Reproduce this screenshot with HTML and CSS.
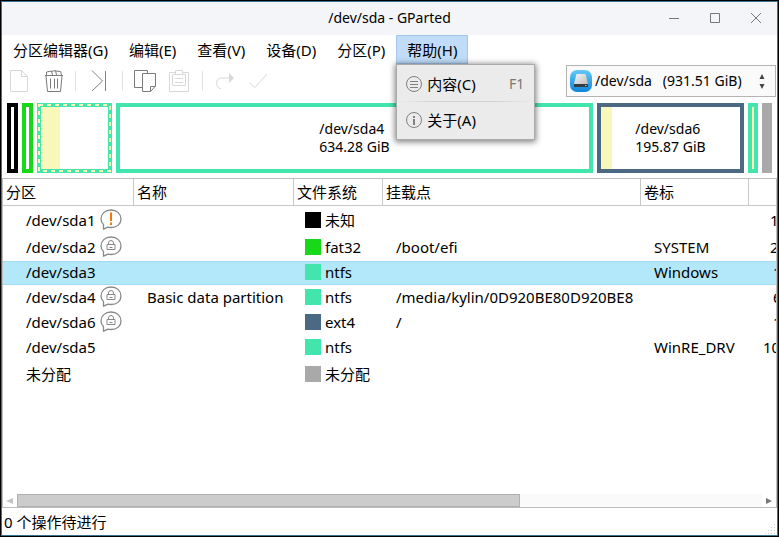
FILE: index.html
```html
<!DOCTYPE html>
<html lang="zh-CN">
<head>
<meta charset="utf-8">
<title>/dev/sda - GParted</title>
<link rel="stylesheet" href="styles.css">
</head>
<body>
<svg width="0" height="0" class="defs" aria-hidden="true">
  <symbol id="bubble" viewBox="0 0 22 22"><path d="M3.500 20.200V15.600C1.700 14 1 12 1 10 1 5 5 1 11 1s10 4 10 9-4 8.500-10 8.500c-1 0-2-.1-3-.4z" fill="none" stroke="#888" stroke-width="1.300" stroke-linejoin="round"/></symbol>
  <symbol id="lock" viewBox="0 0 22 22"><use href="#bubble"/><path d="M7 8.500h8v5H7zM8.500 8.500V7q0-2.500 2.500-2.500t2.500 2.500v1.500M9.500 11.500h3" fill="none" stroke="#888"/></symbol>
  <symbol id="warn" viewBox="0 0 22 22"><use href="#bubble"/><path d="M11 3.500v8.500M11 13.500v2.500" stroke="#f57900" stroke-width="2"/></symbol>
</svg>
<div class="window">
  <header class="titlebar">
    <h1>/dev/sda - GParted</h1>
    <div class="controls">
      <button aria-label="最小化"><svg width="12" height="12"><path d="M1 6.500h10" stroke="#777"/></svg></button>
      <button aria-label="最大化"><svg width="12" height="12"><path d="M1.500 1.500h9v9h-9z" fill="none" stroke="#777"/></svg></button>
      <button aria-label="关闭"><svg width="12" height="12"><path d="M1 1l10 10M11 1L1 11" stroke="#777"/></svg></button>
    </div>
  </header>

  <nav class="menubar">
    <button>分区编辑器(G)</button>
    <button>编辑(E)</button>
    <button>查看(V)</button>
    <button>设备(D)</button>
    <button>分区(P)</button>
    <div class="menu-host">
      <button class="open">帮助(H)</button>
      <div class="menu">
        <button>
          <svg width="18" height="18" fill="none" stroke="#808080"><circle cx="9" cy="9" r="7.500"/><path d="M5 6.500h8M5 9.500h8M5 12.500h8"/></svg>
          <span>内容(C)</span><kbd>F1</kbd>
        </button>
        <hr>
        <button>
          <svg width="18" height="18" fill="none" stroke="#808080"><circle cx="9" cy="9" r="7.500"/><path d="M9 5v2M9 8v6" stroke-width="2"/></svg>
          <span>关于(A)</span>
        </button>
      </div>
    </div>
  </nav>

  <div class="toolbar">
    <div class="tools">
      <button disabled aria-label="新建"><svg width="24" height="24"><path d="M3.500 1.500h11l6 6v15h-17zM14.500 1.500v6h6" fill="none" stroke="#d8d8d8"/></svg></button>
      <button class="trash" aria-label="删除"><svg width="24" height="24"><path d="M3 6.500h18M4 7l1.500 15.500h13L20 7M4.500 6V3l5-1 1 4M9.500 2.500l4-1 1 4.500M13.500 2l5 .5L19.500 6M8.500 9.500v10M12.500 9.500v10M15.500 9.500v10" fill="none" stroke="#7b7b7b"/></svg></button>
      <i></i>
      <button class="next" aria-label="调整大小/移动"><svg width="24" height="24"><path d="M5 1.500L15.500 12 5 22M18.500 2v20" fill="none" stroke="#808080"/></svg></button>
      <i></i>
      <button class="copy" aria-label="复制"><svg width="24" height="24"><path d="M9 18.500H1.500v-17h13V4M9.500 4.500h13V17l-5 5.500h-8zM17.500 22.500V17.500h5" fill="none" stroke="#7b7b7b"/></svg></button>
      <button class="paste" disabled aria-label="粘贴"><svg width="24" height="24"><path d="M8 3.500H2.500v19h19v-19H16M8.500 5.500v-4h7v4M5.500 5.500h13v11h-13zM8 9.500h8M8 13.500h8" fill="none" stroke="#d8d8d8"/></svg></button>
      <i></i>
      <button class="undo" disabled aria-label="撤消"><svg width="24" height="24"><path d="M9 19.500H8a5 5.500 0 0 1 0-10.500h9" fill="none" stroke="#d8d8d8"/><path d="M17 4v10l5-5z" fill="#d8d8d8"/></svg></button>
      <button class="apply" disabled aria-label="应用"><svg width="24" height="24"><path d="M3.500 13.500l5.500 5L21 5" fill="none" stroke="#d8d8d8"/></svg></button>
    </div>
    <label class="device">
      <svg width="22" height="22"><defs><linearGradient id="blue" x2="0" y2="1"><stop stop-color="#64c9f7"/><stop offset="1" stop-color="#0e86d8"/></linearGradient><linearGradient id="metal" x2="1" y2="1"><stop stop-color="#f6f6f6"/><stop offset="1" stop-color="#bdbdbd"/></linearGradient></defs><rect width="22" height="22" rx="7" fill="url(#blue)"/><path d="M6.500 4h9L18 14H4z" fill="url(#metal)"/><path d="M4 14h14v3H4z" fill="#343b42"/><path d="M15 15.500h1.500" stroke="#6df"/></svg>
      <select aria-label="设备"><option>/dev/sda &nbsp; (931.51 GiB)</option></select>
      <svg width="8" height="18"><path d="M4 2l2.500 5h-5zM4 17l2.500-5h-5z" fill="#444"/></svg>
    </label>
  </div>

  <div class="disk">
    <div class="part tiny unknown"></div>
    <div class="part tiny fat"></div>
    <div class="part sda3 ntfs"><span class="used"></span><svg class="marching"><rect x="2" y="2"/></svg></div>
    <div class="part sda4 ntfs"><p>/dev/sda4<br>634.28 GiB</p></div>
    <div class="part sda6 ext"><span class="used"></span><p>/dev/sda6<br>195.87 GiB</p></div>
    <div class="part small ntfs"><span class="used"></span></div>
    <div class="part small free"></div>
  </div>

  <main class="list">
    <div class="view">
      <table>
        <colgroup><col class="c-part"><col class="c-name"><col class="c-fs"><col class="c-mount"><col class="c-label"><col></colgroup>
        <thead><tr><th>分区</th><th>名称</th><th>文件系统</th><th>挂载点</th><th>卷标</th><th></th></tr></thead>
        <tbody>
          <tr class="tall"><td><div class="cell">/dev/sda1<svg><use href="#warn"/></svg></div></td><td></td><td><div class="cell"><b class="unknown"></b>未知</div></td><td></td><td></td><td class="size">1</td></tr>
          <tr class="medium"><td><div class="cell">/dev/sda2<svg><use href="#lock"/></svg></div></td><td></td><td><div class="cell"><b class="fat"></b>fat32</div></td><td>/boot/efi</td><td>SYSTEM</td><td class="size">2</td></tr>
          <tr class="selected"><td>/dev/sda3</td><td></td><td><div class="cell"><b class="ntfs"></b>ntfs</div></td><td></td><td>Windows</td><td class="size gib">1</td></tr>
          <tr><td><div class="cell">/dev/sda4<svg><use href="#lock"/></svg></div></td><td>Basic data partition</td><td><div class="cell"><b class="ntfs"></b>ntfs</div></td><td>/media/kylin/0D920BE80D920BE8</td><td></td><td class="size gib">6</td></tr>
          <tr><td><div class="cell">/dev/sda6<svg><use href="#lock"/></svg></div></td><td></td><td><div class="cell"><b class="ext"></b>ext4</div></td><td>/</td><td></td><td class="size gib">1</td></tr>
          <tr><td>/dev/sda5</td><td></td><td><div class="cell"><b class="ntfs"></b>ntfs</div></td><td></td><td>WinRE_DRV</td><td class="size long">10</td></tr>
          <tr class="tall"><td>未分配</td><td></td><td><div class="cell"><b class="free"></b>未分配</div></td><td></td><td></td><td></td></tr>
        </tbody>
      </table>
    </div>
    <div class="scrollbar">
      <svg width="14" height="13"><path d="M10 4v6L3 7z" fill="#c4c4c4"/></svg>
      <div class="track"><div class="thumb"></div></div>
      <svg width="14" height="13"><path d="M4 4v6l6-3z" fill="#777"/></svg>
    </div>
  </main>
  <footer class="status"><span>0 个操作待进行</span>
    <svg width="12" height="12" fill="#ccc"><path d="M10 1h1v1h-1zM7 4h1v1H7zM10 4h1v1h-1zM4 7h1v1H4zM7 7h1v1H7zM10 7h1v1h-1zM1 10h1v1H1zM4 10h1v1H4zM7 10h1v1H7zM10 10h1v1h-1z"/></svg>
  </footer>
</div>
</body>
</html>
```
FILE: styles.css
```css
* { box-sizing: border-box; }
body {
  margin: 0;
  background: #000;
  color: #000;
  font: 14px/18px "Noto Sans", "Noto Sans CJK SC", sans-serif;
}
button, select { font: inherit; color: inherit; border: 0; padding: 0; background: none; }
svg { display: block; flex: none; }
.defs { position: absolute; }
.window {
  display: flex;
  flex-direction: column;
  height: calc(100vh - 2px);
  margin: 1px;
  border: 1px solid #3a7291;
  background: #fff;
}

.titlebar {
  display: grid;
  grid-template-columns: 1fr auto 1fr;
  align-items: center;
  height: 33px;
  padding-bottom: 2px;
  background: #f4f5f8;
}
.titlebar h1 { grid-column: 2; margin: 0; font-size: 14px; font-weight: 400; }
.controls { display: flex; justify-content: flex-end; gap: 29px; padding-right: 15px; }

.menubar { display: flex; gap: 1px; height: 29px; padding-left: 1px; font-size: 15px; }
.menubar button { padding: 0 10px; height: 29px; white-space: nowrap; }
.menu-host { position: relative; }
.menubar .open { border: 1px solid #a3c7ec; background: #c0dcf8; }
.menu {
  position: absolute;
  z-index: 2;
  top: 29px;
  left: 0;
  width: 139px;
  padding: 1px 0 2px;
  border: 1px solid #aaa;
  background: #ebebeb;
  box-shadow: 0 1px 6px 1px rgba(0, 0, 0, .5);
}
.menubar .menu button { display: flex; align-items: center; gap: 4px; width: 100%; height: 35px; padding: 0 10px 0 8px; }
.menu kbd { margin-left: auto; font: inherit; font-size: 14px; color: #777; }
.menu hr { height: 1px; margin: 0; border: 0; background: linear-gradient(90deg, transparent, #d0d0d0 30%, #d0d0d0 70%, transparent); }

.toolbar { display: flex; justify-content: space-between; align-items: flex-start; height: 39px; padding: 1px 1px 0 5px; }
.tools { display: flex; align-items: center; height: 32px; }
.tools i { width: 1px; height: 20px; background: #e2e2e2; }
.tools button { flex: none; }
.trash { margin: 0 9px 0 11px; }
.next { margin: 0 11px; }
.copy { margin-left: 10px; }
.paste, .apply { margin-left: 10px; }
.paste { margin-right: 11px; }
.undo { margin-left: 9px; }
.device {
  display: flex;
  align-items: center;
  width: 210px;
  height: 32px;
  padding: 0 9px 0 3px;
  border: 1px solid #b4b4b4;
  background: #fafafa;
}
.device select { flex: 1; min-width: 0; height: 28px; padding-left: 3px; appearance: none; }

.disk { display: flex; gap: 4px; height: 75px; padding: 0 5px 5px; }
.part { position: relative; display: flex; min-width: 0; border: 4px solid; }
.part p { position: absolute; inset: 0; display: grid; place-content: center; margin: 0; }
.tiny { width: 11px; }
.small { width: 10px; }
.sda3 { flex: 67; }
.sda4 { flex: 469; }
.sda6 { flex: 139; }
.used { width: 28%; background: #f8f8ba; }
.sda6 .used { width: 8%; }
.small .used { width: 100%; }
.part.unknown { border-color: #000; }
.part.fat { border-color: #18d918; }
.part.ntfs { border-color: #42e5ac; }
.part.ext { border-color: #4b6983; }
.part.free { border-color: #a9a9a9; background: #a9a9a9; }
.marching { position: absolute; inset: -4px; width: calc(100% + 8px); height: calc(100% + 8px); }
.marching rect { width: calc(100% - 4px); height: calc(100% - 4px); fill: none; stroke: #f8f8ba; stroke-width: 2; stroke-dasharray: 4 4; }

.list { display: flex; flex-direction: column; flex: 1; min-height: 0; border: 1px solid #bdbdbd; }
.view { flex: 1; min-height: 0; overflow: hidden; }
table { width: 100%; border-collapse: separate; border-spacing: 0; table-layout: fixed; font-size: 15px; }
.c-part { width: 131px; }
.c-name { width: 160px; }
.c-fs { width: 89px; }
.c-mount { width: 258px; }
.c-label { width: 108px; }
th {
  height: 27px;
  padding: 0 3px;
  border-right: 1px solid #c8c8c8;
  border-bottom: 1px solid #c8c8c8;
  font-weight: 400;
  text-align: left;
}
th:last-child { border-right: 0; }
tbody tr { height: 25px; }
tbody .tall { height: 29px; }
tbody .medium { height: 26px; }
tbody .selected { height: 24px; background: #b3e7fa; box-shadow: inset 0 1px #9fdcf2, inset 0 -1px #9fdcf2; }
td { padding: 0 0 2px 13px; white-space: nowrap; overflow: hidden; }
td:first-child { padding-left: 23px; }
td:nth-child(3) { padding-left: 11px; }
td.size { padding-left: 21px; }
td.gib { padding-left: 24px; }
td.long { padding-left: 14px; }
.cell { display: flex; align-items: center; gap: 4px; height: 18px; }
.cell svg { width: 22px; height: 22px; }
.cell b { width: 16px; height: 16px; }
b.unknown { background: #000; }
b.fat { background: #18d918; }
b.ntfs { background: #42e5ac; }
b.ext { background: #4b6983; }
b.free { background: #a9a9a9; }

.scrollbar { display: flex; height: 13px; }
.track { flex: 1; background: #fafafa; }
.thumb { width: 67.5%; height: 13px; border: 1px solid #b0b0b0; background: #ccc; }
.status { display: flex; align-items: center; justify-content: space-between; height: 27px; padding: 0 1px 0 2px; font-size: 15px; }
.status svg { align-self: flex-end; }
```
